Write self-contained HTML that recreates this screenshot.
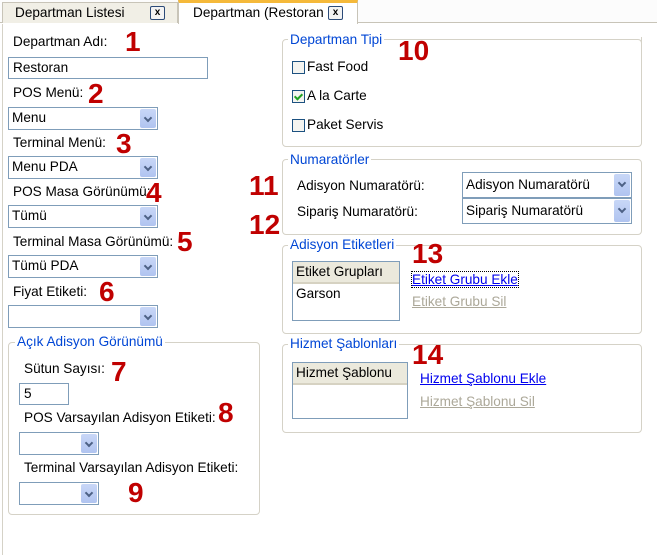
<!DOCTYPE html>
<html><head><meta charset="utf-8"><style>
*{margin:0;padding:0;box-sizing:border-box}
body{width:657px;height:555px;background:#fff;font-family:"Liberation Sans","DejaVu Sans",sans-serif;font-size:13.6px;color:#000;position:relative;overflow:hidden}
.a{position:absolute;white-space:nowrap}
.n{position:absolute;color:#c00000;font-weight:bold;font-size:28px;line-height:28px}
.inp{position:absolute;border:1px solid #7f9db9;background:#fff;padding-left:4px;line-height:19px}
.sel{position:absolute;border:1px solid #7f9db9;background:#fff;padding-left:3px;line-height:20px}
.sel i{position:absolute;right:1px;top:1px;bottom:1px;width:16px;background:linear-gradient(#c8d7f7,#b0c4f0);border-radius:2px}
.sel i:after{content:"";position:absolute;left:5px;top:6px;width:4px;height:4px;border-right:2px solid #4d6185;border-bottom:2px solid #4d6185;transform:rotate(45deg)}
.fs{position:absolute;border:1px solid #d5d2c7;border-radius:4px}
.lg{position:absolute;color:#0046d5;background:#fff;padding:0 2px;line-height:14px}
.cb{position:absolute;width:13px;height:13px;border:1px solid #1c5180;background:#f4f4f0}
.lnk{position:absolute;color:#0000ee;text-decoration:underline}
.dis{position:absolute;color:#aca899;text-decoration:underline}
.list{position:absolute;border:1px solid #7f9db9;background:#fff}
.list .h{height:22px;background:#ebe9dc;border-bottom:2px solid #d6d2c2;padding-left:3px;line-height:20px}
.x{position:absolute;top:6px;width:15px;height:14px;border:1px solid #2b4a78;border-radius:2px;font-size:10px;font-weight:bold;text-align:center;line-height:12px;background:#f3f3f3}
</style></head><body>
<div class="a" style="left:0;top:0;width:657px;height:23px;background:#fcfcfc;border-bottom:1px solid #c8c4b8"></div>
<div class="a" style="left:2px;top:2px;width:176px;height:21px;background:#f1efe6;border:1px solid #c8c4b8;border-bottom:none"></div>
<div class="a" style="left:15px;top:5px;line-height:16px">Departman Listesi</div>
<div class="x" style="left:150px">x</div>
<div class="a" style="left:178px;top:0;width:180px;height:24px;background:#fff;border:1px solid #c8c4b8;border-top:3px solid #f5b93a;border-bottom:none"></div>
<div class="a" style="left:193px;top:5px;line-height:16px;width:134px;overflow:hidden">Departman (Restoran</div>
<div class="x" style="left:328px">x</div>
<div class="a" style="left:2px;top:24px;width:1px;height:531px;background:#d5d2c7"></div>
<div class="a" style="left:641px;top:37px;width:1px;height:20px;background:#d5d2c7"></div>

<div class="a" style="left:13px;top:34px">Departman Adı:</div><div class="n" style="left:125px;top:28px">1</div>
<div class="inp" style="left:8px;top:57px;width:200px;height:22px">Restoran</div>
<div class="a" style="left:13px;top:85px">POS Menü:</div><div class="n" style="left:88px;top:80px">2</div>
<div class="sel" style="left:8px;top:107px;width:150px;height:23px">Menu<i></i></div>
<div class="a" style="left:13px;top:135px">Terminal Menü:</div><div class="n" style="left:116px;top:130px">3</div>
<div class="sel" style="left:8px;top:156px;width:150px;height:23px">Menu PDA<i></i></div>
<div class="a" style="left:13px;top:184px">POS Masa Görünümü:</div><div class="n" style="left:146px;top:179px">4</div>
<div class="sel" style="left:8px;top:205px;width:150px;height:23px">Tümü<i></i></div>
<div class="a" style="left:13px;top:234px">Terminal Masa Görünümü:</div><div class="n" style="left:177px;top:228px">5</div>
<div class="sel" style="left:8px;top:255px;width:150px;height:23px">Tümü PDA<i></i></div>
<div class="a" style="left:13px;top:284px">Fiyat Etiketi:</div><div class="n" style="left:99px;top:278px">6</div>
<div class="sel" style="left:8px;top:305px;width:150px;height:23px"><i></i></div>

<div class="fs" style="left:8px;top:342px;width:252px;height:173px"></div>
<div class="lg" style="left:15px;top:335px">Açık Adisyon Görünümü</div>
<div class="a" style="left:24px;top:361px">Sütun Sayısı:</div><div class="n" style="left:111px;top:358px">7</div>
<div class="inp" style="left:19px;top:383px;width:50px;height:22px">5</div>
<div class="a" style="left:24px;top:410px">POS Varsayılan Adisyon Etiketi:</div><div class="n" style="left:218px;top:399px">8</div>
<div class="sel" style="left:19px;top:432px;width:80px;height:23px"><i></i></div>
<div class="a" style="left:24px;top:460px">Terminal Varsayılan Adisyon Etiketi:</div><div class="n" style="left:128px;top:479px">9</div>
<div class="sel" style="left:19px;top:482px;width:80px;height:23px"><i></i></div>

<div class="fs" style="left:282px;top:39px;width:360px;height:108px"></div>
<div class="lg" style="left:288px;top:33px">Departman Tipi</div><div class="n" style="left:398px;top:37px">10</div>
<div class="cb" style="left:292px;top:61px"></div><div class="a" style="left:307px;top:59px">Fast Food</div>
<div class="cb" style="left:292px;top:90px"><span style="position:absolute;left:3px;top:1px;width:5px;height:8px;border-right:2px solid #21a121;border-bottom:2px solid #21a121;transform:rotate(45deg)"></span></div><div class="a" style="left:307px;top:88px">A la Carte</div>
<div class="cb" style="left:292px;top:119px"></div><div class="a" style="left:307px;top:117px">Paket Servis</div>

<div class="fs" style="left:282px;top:159px;width:360px;height:76px"></div>
<div class="lg" style="left:288px;top:153px">Numaratörler</div>
<div class="n" style="left:249px;top:172px">11</div><div class="n" style="left:249px;top:211px">12</div>
<div class="a" style="left:297px;top:178px">Adisyon Numaratörü:</div>
<div class="a" style="left:297px;top:204px">Sipariş Numaratörü:</div>
<div class="sel" style="left:462px;top:172px;width:170px;height:26px;line-height:24px">Adisyon Numaratörü<i></i></div>
<div class="sel" style="left:462px;top:198px;width:170px;height:26px;line-height:24px">Sipariş Numaratörü<i></i></div>

<div class="fs" style="left:282px;top:245px;width:360px;height:89px"></div>
<div class="lg" style="left:288px;top:238px">Adisyon Etiketleri</div><div class="n" style="left:412px;top:240px">13</div>
<div class="list" style="left:292px;top:261px;width:108px;height:60px"><div class="h">Etiket Grupları</div><div style="padding-left:3px;line-height:20px">Garson</div></div>
<div class="lnk" style="left:412px;top:272px;outline:1px dotted #000">Etiket Grubu Ekle</div>
<div class="dis" style="left:412px;top:294px">Etiket Grubu Sil</div>

<div class="fs" style="left:282px;top:344px;width:360px;height:89px"></div>
<div class="lg" style="left:288px;top:337px">Hizmet Şablonları</div><div class="n" style="left:412px;top:341px">14</div>
<div class="list" style="left:292px;top:362px;width:116px;height:57px"><div class="h">Hizmet Şablonu</div></div>
<div class="lnk" style="left:420px;top:371px">Hizmet Şablonu Ekle</div>
<div class="dis" style="left:420px;top:394px">Hizmet Şablonu Sil</div>
</body></html>
